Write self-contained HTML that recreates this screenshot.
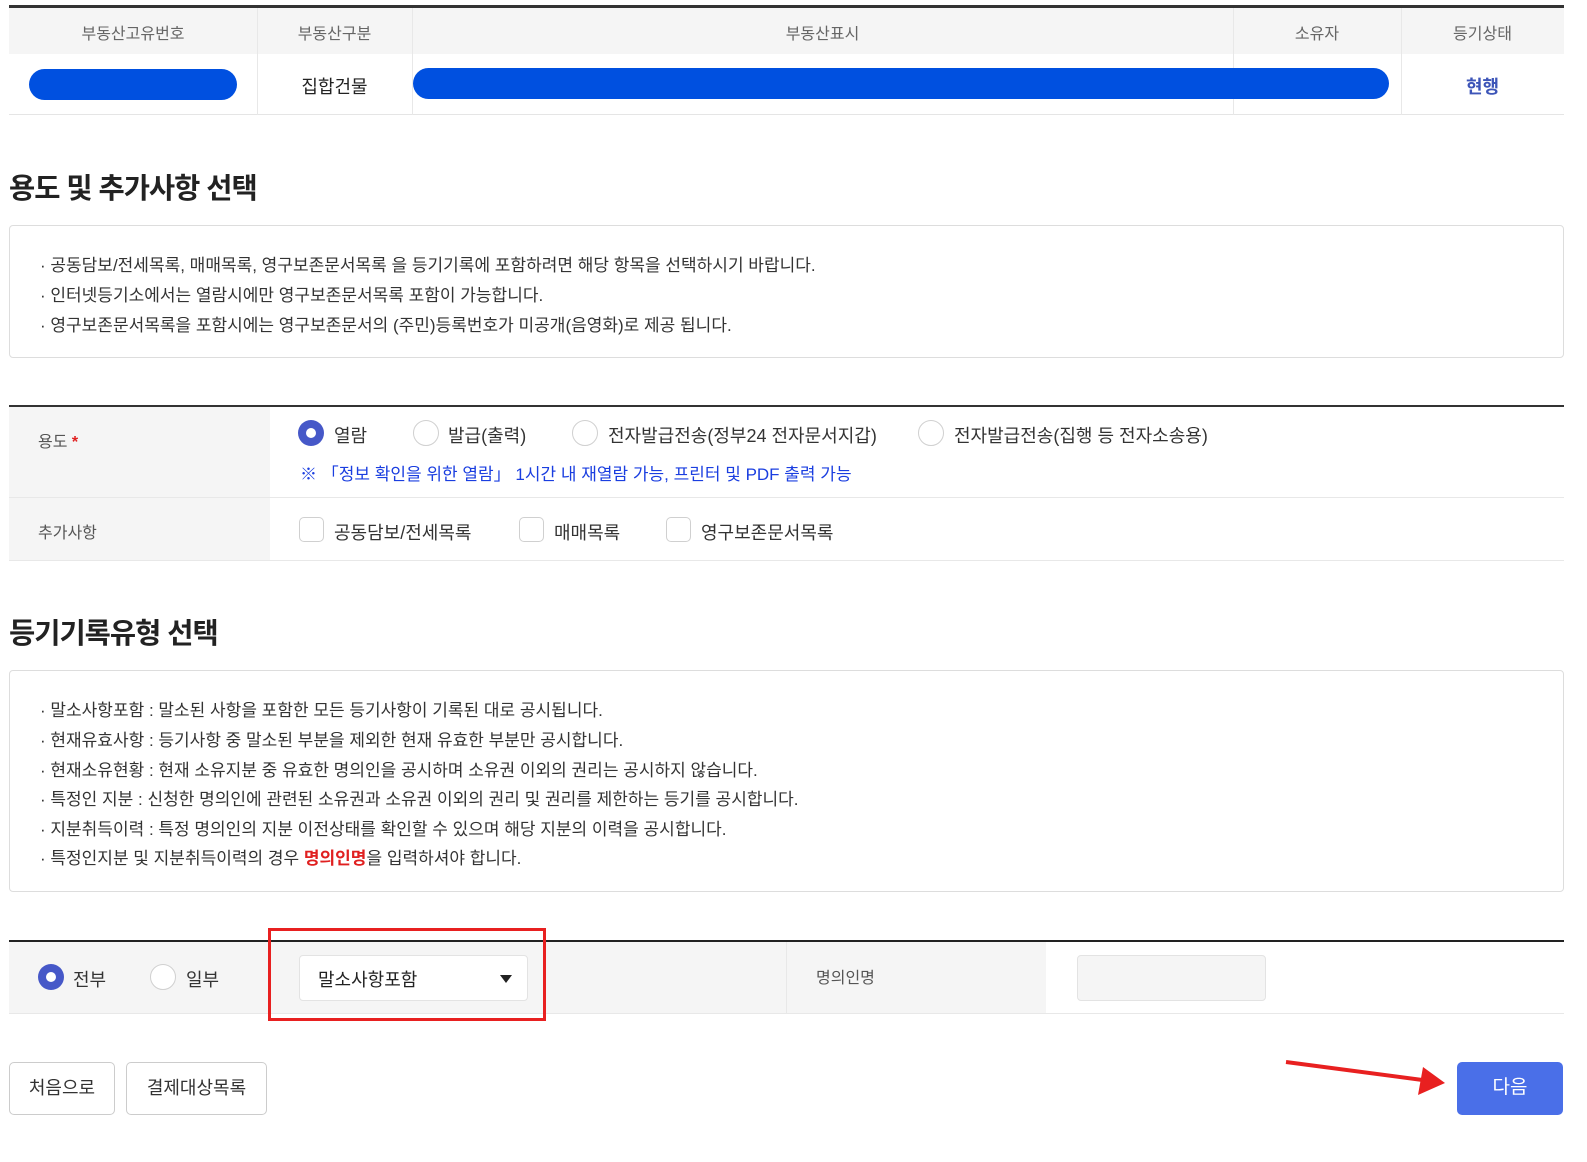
<!DOCTYPE html>
<html><head><meta charset="utf-8"><style>
*{margin:0;padding:0;box-sizing:border-box}
body{width:1587px;height:1162px;background:#fff;position:relative;overflow:hidden;font-family:"Liberation Sans","Noto Sans CJK KR",sans-serif;color:#333}
.a{position:absolute}
.t{position:absolute;white-space:nowrap}
.radio{position:absolute;width:26px;height:26px;border-radius:50%;border:1.5px solid #d0d0d0;background:#fff}
.radio.on{border:none;background:#4658c8}
.radio.on::after{content:"";position:absolute;left:8px;top:8px;width:10px;height:10px;border-radius:50%;background:#fff}
.chk{position:absolute;width:25px;height:25px;border:1.5px solid #d0d0d0;border-radius:5px;background:#fff}
.info{position:absolute;left:9px;width:1555px;border:1px solid #ddd;border-radius:4px}
.info div{position:absolute;left:30px;font-size:17px;color:#333;white-space:nowrap}
h2{position:absolute;left:9px;font-size:28.5px;font-weight:bold;color:#222;letter-spacing:-1px}
.btn{position:absolute;border:1px solid #ccc;border-radius:5px;background:#fff;font-size:18px;color:#333;text-align:center;line-height:50px}
</style></head><body>
<!-- top table -->
<div class="a" style="left:9px;top:5px;width:1555px;height:3px;background:#333"></div>
<div class="a" style="left:9px;top:8px;width:1555px;height:46px;background:#f5f5f5"></div>
<div class="a" style="left:9px;top:114px;width:1555px;height:1px;background:#e5e5e5"></div>
<div class="a" style="left:257px;top:8px;width:1px;height:107px;background:#e8e8e8"></div>
<div class="a" style="left:412px;top:8px;width:1px;height:107px;background:#e8e8e8"></div>
<div class="a" style="left:1233px;top:8px;width:1px;height:107px;background:#e8e8e8"></div>
<div class="a" style="left:1401px;top:8px;width:1px;height:107px;background:#e8e8e8"></div>
<div class="t" style="left:9px;width:248px;text-align:center;top:20px;font-size:16px;color:#666">부동산고유번호</div>
<div class="t" style="left:257px;width:155px;text-align:center;top:20px;font-size:16px;color:#666">부동산구분</div>
<div class="t" style="left:412px;width:821px;text-align:center;top:20px;font-size:16px;color:#666">부동산표시</div>
<div class="t" style="left:1233px;width:168px;text-align:center;top:20px;font-size:16px;color:#666">소유자</div>
<div class="t" style="left:1401px;width:163px;text-align:center;top:20px;font-size:16px;color:#666">등기상태</div>
<div class="a" style="left:29px;top:69px;width:208px;height:31px;border-radius:16px;background:#0050e0"></div>
<div class="t" style="left:257px;width:155px;text-align:center;top:73px;font-size:18px;color:#222">집합건물</div>
<div class="a" style="left:413px;top:68px;width:976px;height:31px;border-radius:16px;background:#0050e0"></div>
<div class="t" style="left:1401px;width:163px;text-align:center;top:73px;font-size:18px;font-weight:bold;color:#3d55b8">현행</div>

<h2 style="top:166px">용도 및 추가사항 선택</h2>
<div class="info" style="top:225px;height:133px">
<div style="top:25px">· 공동담보/전세목록, 매매목록, 영구보존문서목록 을 등기기록에 포함하려면 해당 항목을 선택하시기 바랍니다.</div>
<div style="top:55px">· 인터넷등기소에서는 열람시에만 영구보존문서목록 포함이 가능합니다.</div>
<div style="top:85px">· 영구보존문서목록을 포함시에는 영구보존문서의 (주민)등록번호가 미공개(음영화)로 제공 됩니다.</div>
</div>

<!-- form table -->
<div class="a" style="left:9px;top:405px;width:1555px;height:2px;background:#333"></div>
<div class="a" style="left:9px;top:407px;width:261px;height:154px;background:#f5f5f5"></div>
<div class="a" style="left:9px;top:497px;width:1555px;height:1px;background:#e8e8e8"></div>
<div class="a" style="left:9px;top:560px;width:1555px;height:1px;background:#e8e8e8"></div>
<div class="t" style="left:38px;top:428px;font-size:16px;color:#555">용도 <span style="color:#e02020;font-weight:bold">*</span></div>
<div class="t" style="left:38px;top:519px;font-size:16px;color:#555">추가사항</div>
<div class="radio on" style="left:298px;top:420px"></div>
<div class="t" style="left:334px;top:422px;font-size:18px">열람</div>
<div class="radio" style="left:413px;top:420px"></div>
<div class="t" style="left:448px;top:422px;font-size:18px">발급(출력)</div>
<div class="radio" style="left:572px;top:420px"></div>
<div class="t" style="left:608px;top:422px;font-size:18px">전자발급전송(정부24 전자문서지갑)</div>
<div class="radio" style="left:918px;top:420px"></div>
<div class="t" style="left:954px;top:422px;font-size:18px">전자발급전송(집행 등 전자소송용)</div>
<div class="t" style="left:300px;top:460px;font-size:17px;color:#1a3ee0">※ 「정보 확인을 위한 열람」 1시간 내 재열람 가능, 프린터 및 PDF 출력 가능</div>
<div class="chk" style="left:299px;top:517px"></div>
<div class="t" style="left:334px;top:519px;font-size:18px">공동담보/전세목록</div>
<div class="chk" style="left:519px;top:517px"></div>
<div class="t" style="left:554px;top:519px;font-size:18px">매매목록</div>
<div class="chk" style="left:666px;top:517px"></div>
<div class="t" style="left:701px;top:519px;font-size:18px">영구보존문서목록</div>

<h2 style="top:611px">등기기록유형 선택</h2>
<div class="info" style="top:670px;height:222px">
<div style="top:25px">· 말소사항포함 : 말소된 사항을 포함한 모든 등기사항이 기록된 대로 공시됩니다.</div>
<div style="top:55px">· 현재유효사항 : 등기사항 중 말소된 부분을 제외한 현재 유효한 부분만 공시합니다.</div>
<div style="top:85px">· 현재소유현황 : 현재 소유지분 중 유효한 명의인을 공시하며 소유권 이외의 권리는 공시하지 않습니다.</div>
<div style="top:114px">· 특정인 지분 : 신청한 명의인에 관련된 소유권과 소유권 이외의 권리 및 권리를 제한하는 등기를 공시합니다.</div>
<div style="top:144px">· 지분취득이력 : 특정 명의인의 지분 이전상태를 확인할 수 있으며 해당 지분의 이력을 공시합니다.</div>
<div style="top:173px">· 특정인지분 및 지분취득이력의 경우 <b style="color:#e02020">명의인명</b>을 입력하셔야 합니다.</div>
</div>

<!-- bottom table -->
<div class="a" style="left:9px;top:940px;width:1555px;height:2px;background:#222"></div>
<div class="a" style="left:9px;top:942px;width:1037px;height:71px;background:#f5f5f5"></div>
<div class="a" style="left:786px;top:942px;width:1px;height:71px;background:#e8e8e8"></div>
<div class="a" style="left:9px;top:1013px;width:1555px;height:1px;background:#e8e8e8"></div>
<div class="radio on" style="left:38px;top:964px"></div>
<div class="t" style="left:73px;top:966px;font-size:18px">전부</div>
<div class="radio" style="left:150px;top:964px"></div>
<div class="t" style="left:186px;top:966px;font-size:18px">일부</div>
<div class="a" style="left:299px;top:955px;width:229px;height:46px;border:1px solid #e3e3e3;border-radius:4px;background:#fff"></div>
<div class="t" style="left:318px;top:966px;font-size:18px;color:#222">말소사항포함</div>
<div class="a" style="left:500px;top:975px;width:0;height:0;border-left:6px solid transparent;border-right:6px solid transparent;border-top:8px solid #222"></div>
<div class="a" style="left:268px;top:928px;width:278px;height:93px;border:3px solid #e82020"></div>
<div class="t" style="left:816px;top:964px;font-size:16px;color:#555">명의인명</div>
<div class="a" style="left:1077px;top:955px;width:189px;height:46px;border:1px solid #e3e3e3;border-radius:4px;background:#f5f5f5"></div>

<div class="btn" style="left:9px;top:1062px;width:106px;height:53px">처음으로</div>
<div class="btn" style="left:126px;top:1062px;width:141px;height:53px">결제대상목록</div>
<div class="a" style="left:1457px;top:1062px;width:106px;height:53px;border-radius:5px;background:#4a6fe8;color:#fff;font-size:19px;text-align:center;line-height:52px">다음</div>
<svg class="a" style="left:1280px;top:1055px" width="175" height="45"><line x1="6" y1="7" x2="150" y2="26" stroke="#e82020" stroke-width="4"/><polygon points="165,28 143,12 138,40" fill="#e82020"/></svg>
</body></html>
